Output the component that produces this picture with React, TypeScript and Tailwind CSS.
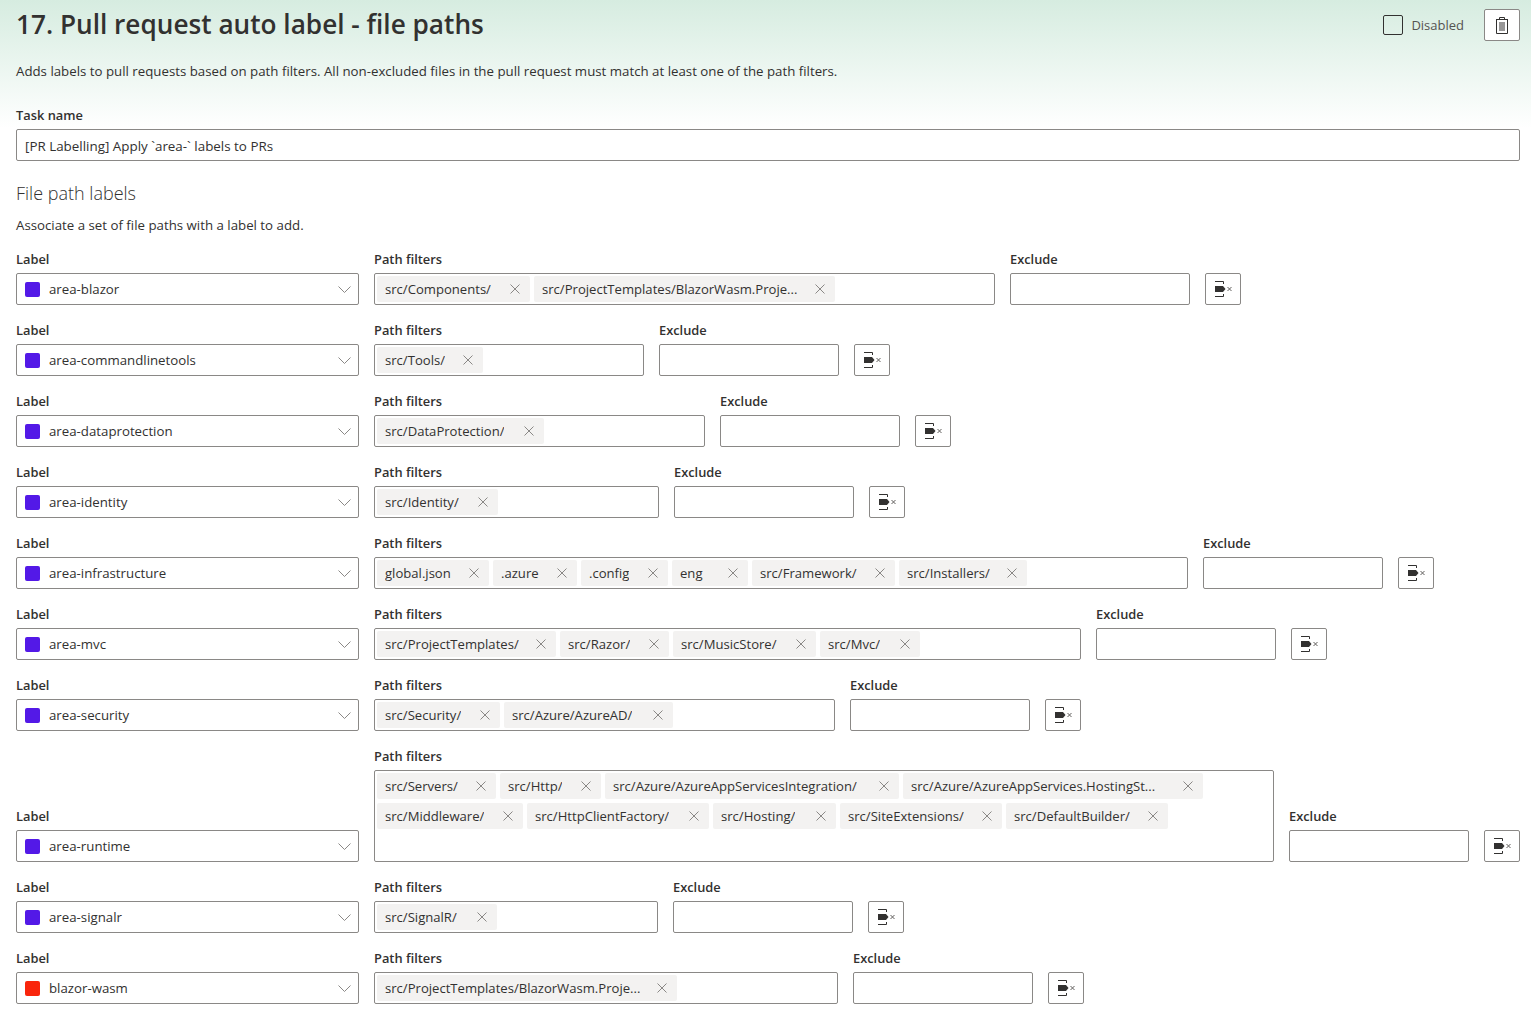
type Tag = { text: string; w: string };

type Row = {
  label: string;
  color: string;
  pathW: string;
  tags: Tag[];
};

const rows: Row[] = [
  {
    label: 'area-blazor',
    color: 'bg-[#5319e7]',
    pathW: 'w-[621px]',
    tags: [
      { text: 'src/Components/', w: 'w-[153px]' },
      { text: 'src/ProjectTemplates/BlazorWasm.Proje...', w: 'w-[301px]' },
    ],
  },
  {
    label: 'area-commandlinetools',
    color: 'bg-[#5319e7]',
    pathW: 'w-[270px]',
    tags: [{ text: 'src/Tools/', w: 'w-[106px]' }],
  },
  {
    label: 'area-dataprotection',
    color: 'bg-[#5319e7]',
    pathW: 'w-[331px]',
    tags: [{ text: 'src/DataProtection/', w: 'w-[167px]' }],
  },
  {
    label: 'area-identity',
    color: 'bg-[#5319e7]',
    pathW: 'w-[285px]',
    tags: [{ text: 'src/Identity/', w: 'w-[121px]' }],
  },
  {
    label: 'area-infrastructure',
    color: 'bg-[#5319e7]',
    pathW: 'w-[814px]',
    tags: [
      { text: 'global.json', w: 'w-[112px]' },
      { text: '.azure', w: 'w-[84px]' },
      { text: '.config', w: 'w-[87px]' },
      { text: 'eng', w: 'w-[76px]' },
      { text: 'src/Framework/', w: 'w-[143px]' },
      { text: 'src/Installers/', w: 'w-[128px]' },
    ],
  },
  {
    label: 'area-mvc',
    color: 'bg-[#5319e7]',
    pathW: 'w-[707px]',
    tags: [
      { text: 'src/ProjectTemplates/', w: 'w-[179px]' },
      { text: 'src/Razor/', w: 'w-[109px]' },
      { text: 'src/MusicStore/', w: 'w-[143px]' },
      { text: 'src/Mvc/', w: 'w-[100px]' },
    ],
  },
  {
    label: 'area-security',
    color: 'bg-[#5319e7]',
    pathW: 'w-[461px]',
    tags: [
      { text: 'src/Security/', w: 'w-[123px]' },
      { text: 'src/Azure/AzureAD/', w: 'w-[169px]' },
    ],
  },
  {
    label: 'area-runtime',
    color: 'bg-[#5319e7]',
    pathW: 'w-[900px]',
    tags: [
      { text: 'src/Servers/', w: 'w-[119px]' },
      { text: 'src/Http/', w: 'w-[101px]' },
      { text: 'src/Azure/AzureAppServicesIntegration/', w: 'w-[294px]' },
      { text: 'src/Azure/AzureAppServices.HostingSt...', w: 'w-[300px]' },
      { text: 'src/Middleware/', w: 'w-[146px]' },
      { text: 'src/HttpClientFactory/', w: 'w-[182px]' },
      { text: 'src/Hosting/', w: 'w-[123px]' },
      { text: 'src/SiteExtensions/', w: 'w-[162px]' },
      { text: 'src/DefaultBuilder/', w: 'w-[162px]' },
    ],
  },
  {
    label: 'area-signalr',
    color: 'bg-[#5319e7]',
    pathW: 'w-[284px]',
    tags: [{ text: 'src/SignalR/', w: 'w-[120px]' }],
  },
  {
    label: 'blazor-wasm',
    color: 'bg-[#f9250c]',
    pathW: 'w-[464px]',
    tags: [{ text: 'src/ProjectTemplates/BlazorWasm.Proje...', w: 'w-[300px]' }],
  },
];

function FieldLabel({ children }: { children: string }) {
  return <div className="h-[30px] pt-[6px] text-[12.85px] leading-5 font-semibold text-[#323130]">{children}</div>;
}

function TrashIcon() {
  return (
    <svg width="12" height="17" viewBox="0 0 12 17" fill="none" stroke="#323130" strokeWidth="1">
      <path d="M0 2.500h12M.5 2.500v14h11v-14M3.500 2.500V.5h5v2M4 5v9M6 5v9M8 5v9" />
    </svg>
  );
}

function RemoveIcon() {
  return (
    <svg width="17" height="16" viewBox="0 0 17 16" fill="none">
      <path d="M0 .5h8.500V3M0 15.500h8.500V13" stroke="#323130" strokeWidth="1" />
      <path d="M0 5h8l2.500 3L8 11H0z" fill="#323130" />
      <path d="M12.500 6l4 4M16.500 6l-4 4" stroke="#605e5c" strokeWidth="1" />
    </svg>
  );
}

function PathTag({ tag }: { tag: Tag }) {
  return (
    <div className={`flex h-[26px] items-center justify-between rounded-[2px] bg-[#f3f2f1] pl-2 pr-[9px] ${tag.w}`}>
      <span className="mt-px truncate text-[13.1px] text-[#323130]">{tag.text}</span>
      <svg width="12" height="12" viewBox="0 0 12 12" className="shrink-0" stroke="#8a8886" strokeWidth="1">
        <path d="M1.500 1.500l9 9M10.500 1.500l-9 9" />
      </svg>
    </div>
  );
}

function LabelRow({ row }: { row: Row }) {
  return (
    <div className="mb-[9px] flex items-end gap-[15px]">
      <div className="w-[343px] shrink-0">
        <FieldLabel>Label</FieldLabel>
        <div className="flex h-8 items-center rounded-[2px] border border-[#8a8886] bg-white pl-2 pr-[6px]">
          <span className={`h-[15px] w-[15px] rounded-[2px] ${row.color}`} />
          <span className="mt-px ml-[9px] flex-1 text-[13.25px] text-[#323130]">{row.label}</span>
          <svg width="13" height="7" viewBox="0 0 13 7" fill="none" stroke="#8a8886" strokeWidth="1" className="mr-px">
            <path d="M.5.500l6 6 6-6" />
          </svg>
        </div>
      </div>
      <div className={`shrink-0 ${row.pathW}`}>
        <FieldLabel>Path filters</FieldLabel>
        <div className="flex min-h-8 flex-wrap content-start gap-1 rounded-[2px] border border-[#8a8886] bg-white p-[2px] data-[tall=true]:h-[92px]" data-tall={row.tags.length > 6}>
          {row.tags.map((tag) => (
            <PathTag key={tag.text} tag={tag} />
          ))}
        </div>
      </div>
      <div className="w-[180px] shrink-0">
        <FieldLabel>Exclude</FieldLabel>
        <div className="h-8 rounded-[2px] border border-[#8a8886] bg-white" />
      </div>
      <button className="flex h-8 w-9 shrink-0 items-center justify-center rounded-[2px] border border-[#8a8886] bg-white">
        <RemoveIcon />
      </button>
    </div>
  );
}

export default function App() {
  return (
    <div className="h-screen overflow-hidden bg-[linear-gradient(#d6ece0,#ffffff_128px)] pl-4 pr-[11px] font-['Open_Sans',sans-serif] text-[#323130]">
      <div className="flex h-[50px] items-start justify-between">
        <h1 className="pt-[4px] text-[26.2px] leading-10 font-semibold">17. Pull request auto label - file paths</h1>
        <div className="flex items-center pt-[9px]">
          <span className="h-5 w-5 rounded-[2px] border border-[#323130] bg-transparent" />
          <span className="mt-px ml-2 text-[13px] text-[#555351]">Disabled</span>
          <button className="ml-5 flex h-8 w-9 items-center justify-center rounded-[2px] border border-[#8a8886] bg-white">
            <TrashIcon />
          </button>
        </div>
      </div>
      <p className="mt-[11px] text-[13.27px] leading-5">
        Adds labels to pull requests based on path filters. All non-excluded files in the pull request must match at least one of the path filters.
      </p>
      <div className="mt-[18px]">
        <FieldLabel>Task name</FieldLabel>
        <div className="flex h-8 items-center rounded-[2px] border border-[#8a8886] bg-white px-2 pt-[2px] text-[13.4px]">
          [PR Labelling] Apply `area-` labels to PRs
        </div>
      </div>
      <h2 className="mt-[18px] text-[18px] leading-7 font-light">File path labels</h2>
      <p className="mt-[8px] mb-[8px] text-[13.27px] leading-5">Associate a set of file paths with a label to add.</p>
      {rows.map((row) => (
        <LabelRow key={row.label} row={row} />
      ))}
    </div>
  );
}
